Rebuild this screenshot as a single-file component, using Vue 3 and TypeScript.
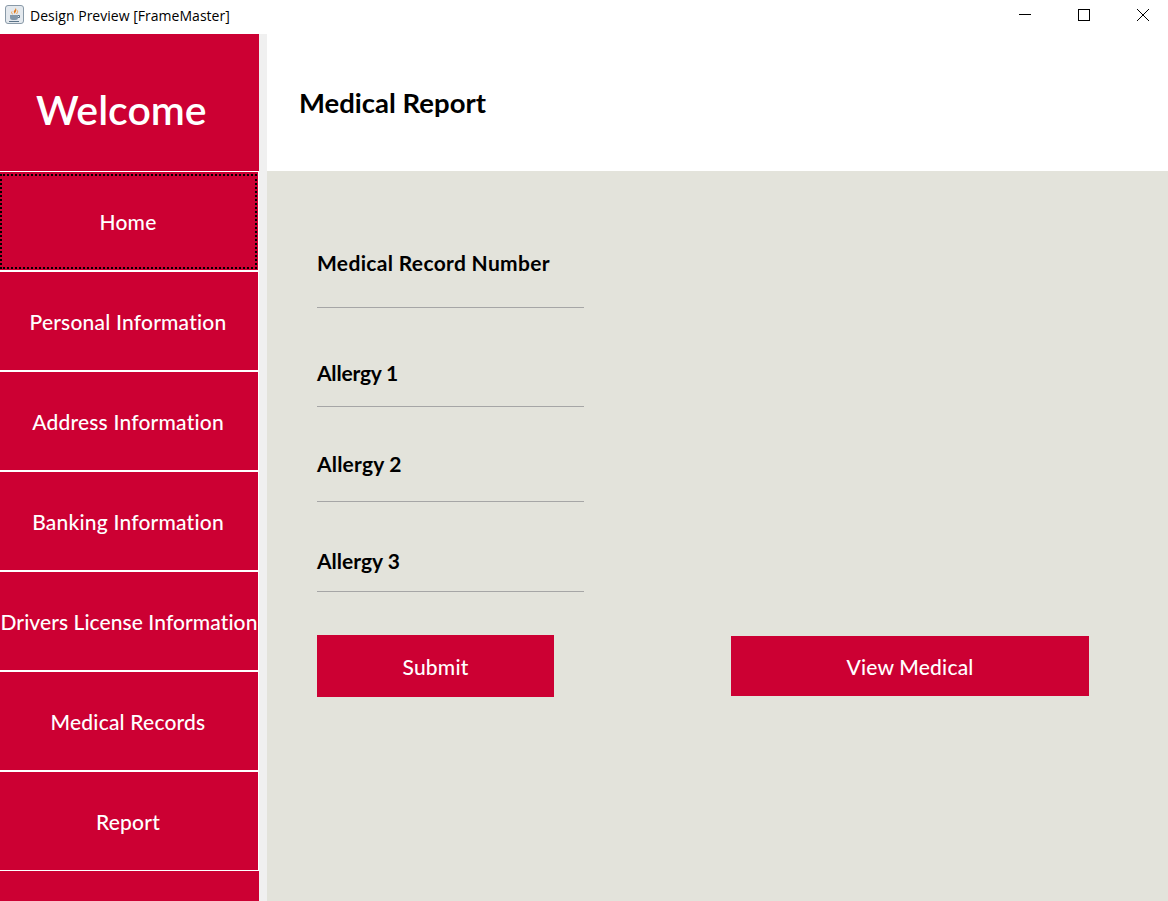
<script setup lang="ts">
const navItems: string[] = [
  'Home',
  'Personal Information',
  'Address Information',
  'Banking Information',
  'Drivers License Information',
  'Medical Records',
  'Report',
]
const fields: { label: string; cls: string }[] = [
  { label: 'Medical Record Number', cls: 'f1' },
  { label: 'Allergy 1', cls: 'f2' },
  { label: 'Allergy 2', cls: 'f3' },
  { label: 'Allergy 3', cls: 'f4' },
]
</script>

<template>
  <div class="window">
    <header class="titlebar">
      <svg class="app-icon" width="20" height="20" viewBox="0 0 20 20">
        <rect x="0.5" y="0.5" width="18" height="18" rx="2.5" fill="#e4e9ee" stroke="#8a9aa8" />
        <path d="M10.500 2.500c1 2-2.500 3-1.500 5 .4.900 1 1.300 1 1.300-.3-1.500 2.800-2.600 .5-6.300z" fill="#e07b20" />
        <path d="M7 6.500c-1 1.200 0 2.200 .8 2.800M12.500 5.500c.5 1.500-.5 2.500-1 3.500" stroke="#e9a050" fill="none" />
        <path d="M5 10h8v2.500a2.500 2.500 0 0 1-2.500 2.500h-3A2.500 2.500 0 0 1 5 12.500z" fill="#8397aa" />
        <path d="M13 10.500h1.500v2H13M4 16.500h10" stroke="#5b7388" fill="none" />
      </svg>
      <span class="title-text">Design Preview [FrameMaster]</span>
      <div class="controls">
        <svg class="ctl" width="59" height="34" viewBox="0 0 59 34"><path d="M20 14.500h12" stroke="#000" fill="none" /></svg>
        <svg class="ctl" width="59" height="34" viewBox="0 0 59 34"><rect x="20.500" y="9.500" width="11" height="11" stroke="#000" fill="none" /></svg>
        <svg class="ctl" width="51" height="34" viewBox="0 0 51 34"><path d="M20 9l12 12M32 9L20 21" stroke="#000" fill="none" /></svg>
      </div>
    </header>
    <div class="body">
      <aside class="sidebar">
        <div class="welcome">Welcome</div>
        <button
          v-for="(item, i) in navItems"
          :key="item"
          class="nav-btn"
          :class="{ focused: i === 0 }"
          type="button"
        >
          <span>{{ item }}</span>
        </button>
        <div class="nav-rest"></div>
      </aside>
      <div class="strip"></div>
      <main class="main">
        <div class="page-head"><h1>Medical Report</h1></div>
        <section class="content">
          <div class="form">
            <div v-for="f in fields" :key="f.label" class="field" :class="f.cls">
              <label>{{ f.label }}</label>
            </div>
          </div>
          <div class="actions">
            <button class="action submit" type="button">Submit</button>
            <button class="action view" type="button">View Medical</button>
          </div>
        </section>
      </main>
    </div>
  </div>
</template>

<style>
html, body { margin: 0; padding: 0; background: #fff; overflow: hidden; }
</style>

<style scoped>
.window {
  width: 1168px;
  height: 901px;
  display: flex;
  flex-direction: column;
  overflow: hidden;
  font-family: Lato, "Open Sans", sans-serif;
}
.titlebar {
  height: 34px;
  flex: none;
  display: flex;
  align-items: center;
  background: #fff;
  padding-left: 5px;
  box-sizing: border-box;
}
.app-icon { margin-right: 5px; margin-bottom: 4px; }
.title-text {
  font-family: "Open Sans", sans-serif;
  font-size: 14px;
  letter-spacing: 0.02px;
  color: #000;
  margin-bottom: 3px;
}
.controls { margin-left: auto; display: flex; align-self: flex-start; }
.ctl { display: block; }
.body { flex: 1; display: flex; min-height: 0; }
.sidebar {
  width: 259px;
  flex: none;
  display: flex;
  flex-direction: column;
  background: #fff;
}
.welcome {
  height: 137px;
  flex: none;
  box-sizing: border-box;
  margin-bottom: 1px;
  background: #cc0033;
  color: #fff;
  font-size: 41px;
  font-weight: 600;
  display: flex;
  align-items: center;
  padding-left: 36px;
  padding-top: 14px;
}
.nav-btn {
  position: relative;
  width: 258px;
  height: 98px;
  flex: none;
  margin: 0 0 2px;
  padding: 0 2px 0 0;
  border: 0;
  background: #cc0033;
  color: #fff;
  font-family: inherit;
  font-size: 21px;
  font-weight: 500;
  letter-spacing: 0.2px;
  white-space: nowrap;
  overflow: visible;
  display: flex;
  align-items: center;
  justify-content: center;
  box-sizing: border-box;
}
.nav-btn span { margin-top: 1px; }
.nav-btn.focused::after {
  content: "";
  position: absolute;
  top: 2px;
  bottom: 1px;
  left: 0;
  right: 1px;
  border: 2px dotted #000;
  box-sizing: border-box;
}
.nav-btn:nth-of-type(5) { padding: 0; letter-spacing: 0.08px; }
.nav-btn:nth-of-type(7) { margin-bottom: 1px; }
.nav-rest { flex: 1; background: #cc0033; }
.strip { width: 8px; flex: none; background: #f0f0f0; }
.main { flex: 1; display: flex; flex-direction: column; min-width: 0; }
.page-head {
  height: 137px;
  flex: none;
  background: #fff;
  display: flex;
  align-items: center;
  padding-left: 32px;
}
h1 {
  margin: 0;
  font-size: 27.5px;
  font-weight: 700;
  color: #000;
}
.content {
  flex: 1;
  background: #e3e3db;
  padding: 65px 79px 0 50px;
}
.form { width: 267px; }
.field {
  box-sizing: border-box;
  border-bottom: 1px solid #a6a6a6;
  display: flex;
  align-items: flex-end;
}
.field label {
  font-size: 21px;
  font-weight: 700;
  color: #000;
  line-height: 26px;
}
.f1 { height: 72px; padding-bottom: 31px; }
.f1 label { letter-spacing: 0.33px; }
.f2 { height: 99px; padding-bottom: 20px; }
.f2 label { letter-spacing: -0.2px; }
.f3 { height: 95px; padding-bottom: 24px; }
.f3 label { letter-spacing: 0.2px; }
.f4 { height: 90px; padding-bottom: 17px; }
.actions {
  display: flex;
  align-items: center;
  gap: 177px;
  margin-top: 43px;
}
.action {
  border: 0;
  padding: 0;
  background: #cc0033;
  color: #fff;
  font-family: inherit;
  font-size: 21px;
  font-weight: 500;
  letter-spacing: 0.2px;
}
.submit { width: 237px; height: 62px; }
.view { width: 358px; height: 60px; }
</style>
